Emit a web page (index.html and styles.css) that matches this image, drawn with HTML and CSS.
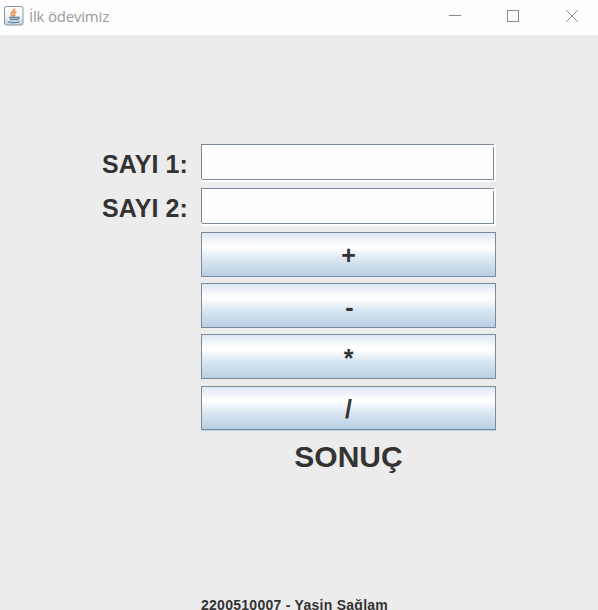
FILE: index.html
```html
<!DOCTYPE html>
<html lang="tr">
<head>
<meta charset="utf-8">
<title>İlk ödevimiz</title>
<link rel="stylesheet" href="styles.css">
</head>
<body>
<header class="titlebar">
  <svg class="app-icon" width="20" height="20" viewBox="0 0 20 20">
    <defs><linearGradient id="tile" x1="0" y1="0" x2="0" y2="1"><stop offset="0" stop-color="#fff"/><stop offset=".5" stop-color="#f4f6f8"/><stop offset="1" stop-color="#c3d3df"/></linearGradient></defs>
    <rect x=".5" y=".5" width="18.5" height="18.5" rx="2" fill="url(#tile)" stroke="#8297aa"/>
    <path d="M10.500 2.500C11.500 5 6.500 6 7.200 8.200c.2 1 1.500 1.500 1.800 2.500M12.500 5.500c-1.500.8-3 1.700-2.500 2.800.3.800.9 1 .2 2.200" fill="none" stroke="#eb9348" stroke-width="1.900"/>
    <path d="M5 11.500h8M6 13.500h6.500M13 11.300c3-.8 3 1.700-.5 2.200M4 15.800c2 1.100 9 1.100 11.500-.2" fill="none" stroke="#6489a8" stroke-width="1.300"/>
  </svg>
  <span class="title">İlk ödevimiz</span>
  <svg class="controls" width="132" height="14" viewBox="0 0 132 14" fill="none" stroke="#8d8d8d">
    <path d="M0 6.500h12"/>
    <rect x="58.500" y="1.500" width="11" height="11"/>
    <path d="M117 1l12 12M129 1l-12 12"/>
  </svg>
</header>
<main class="form">
  <label class="label" for="n1">SAYI 1:</label>
  <div class="field"><input class="input" id="n1" type="text"></div>
  <label class="label" for="n2">SAYI 2:</label>
  <div class="field"><input class="input" id="n2" type="text"></div>
  <div class="buttons">
    <button class="button button-plus">+</button>
    <button class="button button-minus">-</button>
    <button class="button">*</button>
    <button class="button button-last">/</button>
  </div>
  <div class="result">SONUÇ</div>
</main>
<footer class="footer">2200510007 - Yasin Sağlam</footer>
</body>
</html>
```
FILE: styles.css
```css
* { box-sizing: border-box; }
body {
  margin: 0;
  height: 610px;
  overflow: hidden;
  display: flex;
  flex-direction: column;
  background: #ececec;
  color: #333;
  font-family: "Liberation Sans", Arial, sans-serif;
  font-weight: bold;
}
.titlebar {
  height: 35px;
  flex: none;
  display: flex;
  align-items: flex-start;
  padding: 6px 17px 0 4px;
  background: #fefefe;
}
.title {
  margin: 0 0 0 5px;
  font: 15px/20px "Open Sans", sans-serif;
  color: #999;
  letter-spacing: -0.2px;
}
.controls { margin: 3px 0 0 auto; }
.form {
  display: grid;
  grid-template-columns: 188px 295px;
  column-gap: 13px;
  padding-top: 109px;
}
.label {
  height: 44px;
  font-size: 25px;
  line-height: 41px;
  text-align: right;
  white-space: nowrap;
  letter-spacing: 0.1px;
}
.field {
  position: relative;
  height: 38px;
  padding: 0 2px 2px 0;
  background: #fefefe;
}
/* Bevel gaps in the bottom-left and top-right border corners */
.field::before,
.field::after {
  content: "";
  position: absolute;
  width: 1px;
  height: 2px;
  background: #fefefe;
}
.field::before { left: 0; top: 35px; }
.field::after { right: 2px; top: 1px; }
.input {
  display: block;
  width: 293px;
  height: 36px;
  border: 1px solid #7a8a99;
  background: #fefefe;
  outline: 0;
}
.buttons {
  grid-column: 2;
  display: grid;
  row-gap: 6px;
}
.button {
  display: block;
  width: 295px;
  height: 45px;
  padding: 2px 0 0;
  border: 1px solid #7a8a99;
  border-radius: 0;
  background: linear-gradient(#dde8f3 0%, #fff 30%, #fff 34%, #dce8f2 60%, #b8cfe5 100%);
  color: #333;
  font: bold 25px/40px "Liberation Sans", Arial, sans-serif;
}
.button-plus { padding-top: 0; }
.button-minus { padding-left: 2px; }
.button-last {
  height: 44px;
  margin-top: 1px;
  box-shadow: 0 1px #b8cfe5;
}
.result {
  grid-column: 2;
  margin-top: 9px;
  font-size: 30px;
  line-height: 36px;
  text-align: center;
}
.footer {
  height: 14px;
  margin: auto 0 0 201px;
  font-size: 14px;
  line-height: 18px;
  letter-spacing: 0.27px;
  white-space: nowrap;
}
```
